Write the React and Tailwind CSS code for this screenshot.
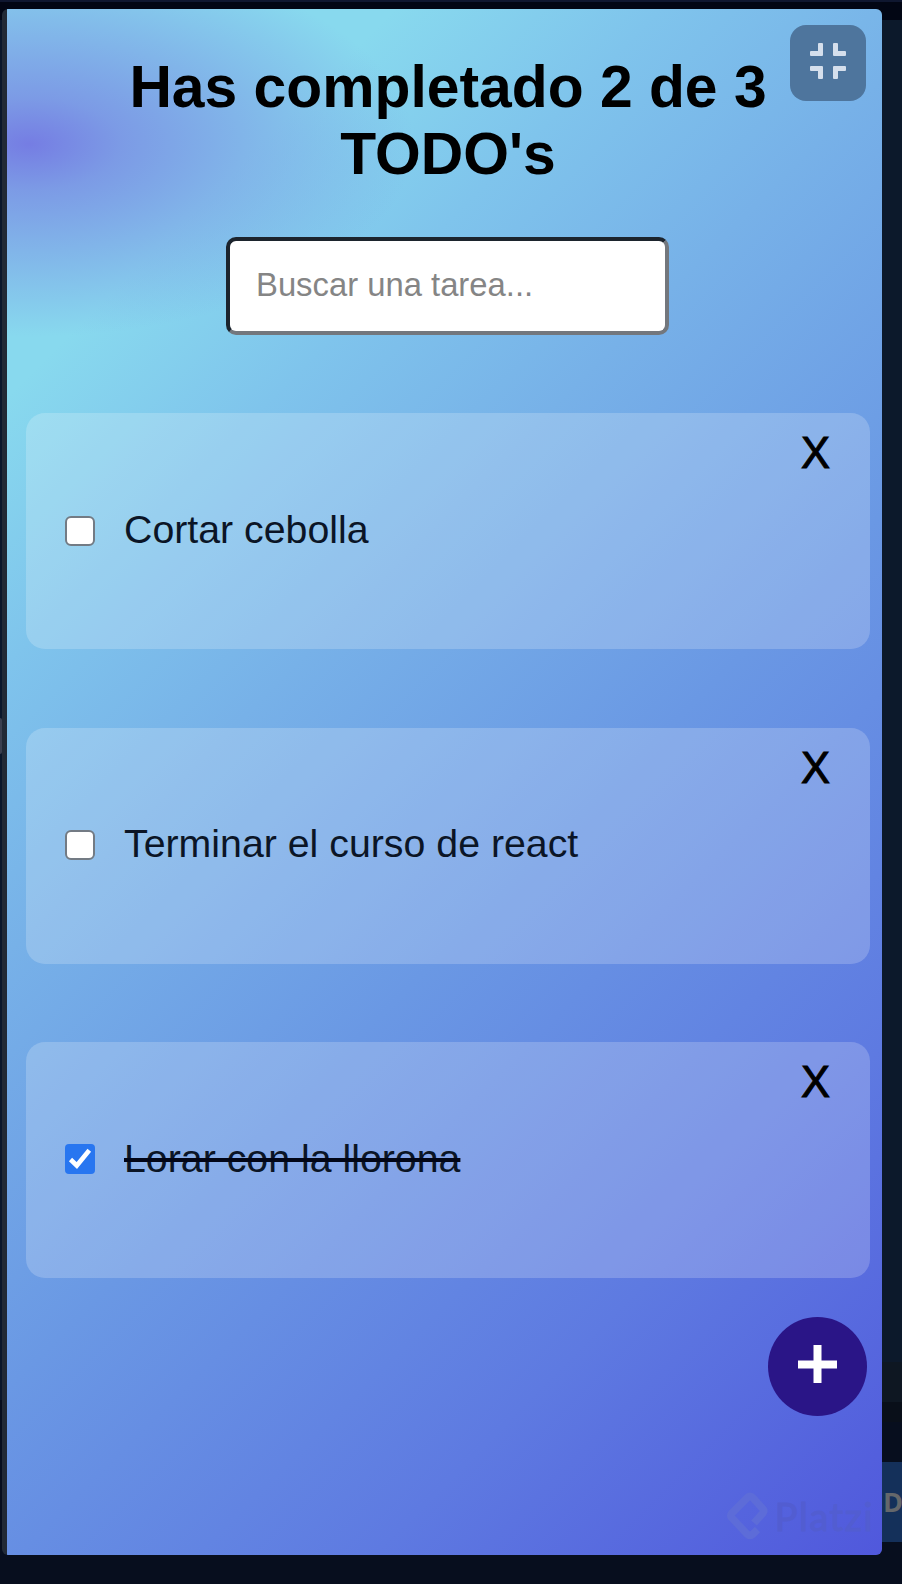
const tasks = [
  { text: "Cortar cebolla", done: false },
  { text: "Terminar el curso de react", done: false },
  { text: "Lorar con la llorona", done: true },
];

function CheckBox({ checked }) {
  return checked ? (
    <span className="mb-[2px] flex h-[30px] w-[30px] shrink-0 items-center justify-center rounded-[4px] bg-[#2876f0]">
      <svg viewBox="0 0 30 30" className="h-[30px] w-[30px]" fill="none" stroke="white" strokeWidth="4.6">
        <path d="M5.500 15.500 L11.800 21.500 L24.300 6.200" />
      </svg>
    </span>
  ) : (
    <span className="mb-px h-[30px] w-[30px] shrink-0 rounded-[6px] border-2 border-[#737b84] bg-white" />
  );
}

function Task({ text, done }) {
  return (
    <li className="relative flex h-[236px] items-center rounded-[19px] bg-white/20 pl-[39px] text-[39.3px] leading-[45px] text-[#0b1526]">
      <CheckBox checked={done} />
      <span
        className={
          done
            ? "mb-[4px] ml-[29px] whitespace-nowrap line-through decoration-[#020617] decoration-[4px]"
            : "mb-[4px] ml-[29px] whitespace-nowrap"
        }
      >
        {text}
      </span>
      <button className="absolute top-[16px] right-[40px] text-[43.500px] leading-[48px] text-black [-webkit-text-stroke:1px_black]">
        X
      </button>
    </li>
  );
}

export default function App() {
  return (
    <div className="relative flex h-[1584px] w-[902px] overflow-hidden bg-[#070e1e] font-['Liberation_Sans',Arial,sans-serif]">
      <div className="absolute top-0 left-0 h-[2px] w-full bg-[#0f1730]" />
      <div className="absolute top-[2px] left-0 h-[18px] w-full bg-[#020614]" />
      <div className="absolute top-[20px] left-0 h-[1380px] w-[2px] bg-[#0b172b]" />
      <div className="absolute top-[718px] left-0 h-[36px] w-[2px] rounded-r-full bg-[#3b4050]" />
      <div className="absolute top-[20px] right-0 flex h-[1564px] w-[21px] flex-col bg-[#070e1e]">
        <div className="h-[1342px] bg-[#0c192b]" />
        <div className="h-[40px] bg-[#0e1722]" />
        <div className="h-[20px] bg-[#090f19]" />
        <div className="h-[40px]" />
        <div className="flex h-[80px] items-center overflow-hidden bg-[#14305a] pl-[2px] font-['Open_Sans',sans-serif] text-[27px] font-bold text-[#64676b]">
          D
        </div>
      </div>

      <div className="relative mt-[9px] ml-[2px] h-[1546px] w-[880px] overflow-hidden rounded-[6px] bg-[#222a36] pl-[5px]">
        <main className="relative h-full bg-[radial-gradient(ellipse_385px_193px_at_22px_135px,#757de3_0%,#7a90e4d9_24%,transparent_100%),linear-gradient(135deg,#88d9ee_16%,#7fc4ec_27%,#77b1e8_39%,#6a98e4_57%,#5e7ae1_79%,#5058dc_100%)]">
          <h1 className="pt-[44px] pl-[7px] text-center text-[58.8px] leading-[67px] font-bold text-black">
            Has completado 2 de 3
            <br />
            TODO's
          </h1>

          <div className="mt-[50px] flex justify-center pl-[6px]">
            <input
              className="h-[98px] w-[443px] rounded-[10px] border-4 border-t-[#1c242d] border-r-[#73777d] border-b-[#73777d] border-l-[#1c242d] bg-white px-[26px] pb-[3px] text-[32.800px] text-black outline-none placeholder:text-[#858585]"
              placeholder="Buscar una tarea..."
            />
          </div>

          <ul className="mr-[12px] ml-[19px] flex flex-col gap-[78.500px] pt-[78px]">
            {tasks.map((task) => (
              <Task key={task.text} text={task.text} done={task.done} />
            ))}
          </ul>

          <button className="absolute top-[1308px] right-[15px] flex h-[99px] w-[99px] items-center justify-center rounded-full bg-[#2a1587]">
            <svg viewBox="0 0 99 99" className="h-[99px] w-[99px]" fill="white">
              <path d="M45.500 28h8v15.500h15.500v8h-15.500v14.500h-8v-14.500h-15.500v-8h15.500z" />
            </svg>
          </button>

          <div className="absolute top-[1482px] right-[8px] flex h-[50px] items-center">
            <svg viewBox="0 0 42 50" className="h-[50px] w-[42px]" fill="none" stroke="#5d6cd8" strokeWidth="7.5" strokeLinejoin="round">
              <path d="M28 32 L37 22 Q38.500 20 37 18 L27 7 Q24 3.500 21 7 L5.500 22.500 Q4 24.500 5.500 26.500 L21 43 Q24 45.500 27 43 L31.500 38.500" />
            </svg>
            <span className="ml-[7px] font-['Lato',sans-serif] text-[38px] leading-[46px] tracking-[1.500px] text-[#525dd1] [-webkit-text-stroke:1px_#525dd1]">
              Platzi
            </span>
          </div>
        </main>

        <button className="absolute top-[16px] right-[16px] flex h-[76px] w-[76px] items-center justify-center rounded-[16px] bg-[#4e759d]">
          <svg viewBox="0 0 76 76" className="h-[76px] w-[76px]" fill="#d5dfec">
            <path d="M29 18h3a1 1 0 0 1 1 1v11a1 1 0 0 1-1 1H21a1 1 0 0 1-1-1v-3a1 1 0 0 1 1-1h7v-7a1 1 0 0 1 1-1z" />
            <path d="M44 18h3a1 1 0 0 1 1 1v7h7a1 1 0 0 1 1 1v3a1 1 0 0 1-1 1H44a1 1 0 0 1-1-1V19a1 1 0 0 1 1-1z" />
            <path d="M21 41h11a1 1 0 0 1 1 1v11a1 1 0 0 1-1 1h-3a1 1 0 0 1-1-1v-7h-7a1 1 0 0 1-1-1v-3a1 1 0 0 1 1-1z" />
            <path d="M44 41h11a1 1 0 0 1 1 1v3a1 1 0 0 1-1 1h-7v7a1 1 0 0 1-1 1h-3a1 1 0 0 1-1-1V42a1 1 0 0 1 1-1z" />
          </svg>
        </button>
      </div>
    </div>
  );
}
